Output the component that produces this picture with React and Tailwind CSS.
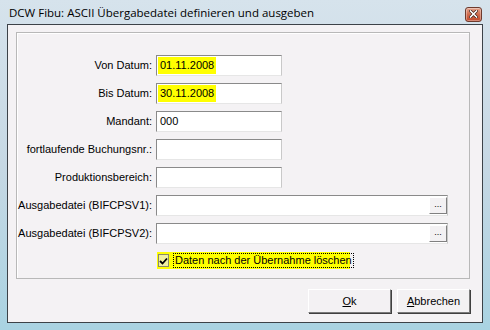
import React from "react";

function Field({ label, value, hl, wide }) {
  return (
    <div className="flex items-center">
      <div className="w-[138px] pr-[4px] text-right text-[11px] leading-none text-black whitespace-nowrap">{label}</div>
      <div
        className={`flex h-[21px] items-center border-t border-l border-t-[#8a8a8a] border-l-[#8a8a8a] border-r border-b border-r-[#c9c9c9] border-b-[#e6e6e6] bg-white ${wide ? "w-[292px]" : "w-[126px]"}`}
      >
        {value ? (
          <span className={`ml-[1px] px-[2px] h-[17px] flex items-center text-[11px] text-black ${hl ? "bg-[#ffff00]" : ""}`}>{value}</span>
        ) : null}
        {wide ? (
          <div className="ml-auto flex h-[17px] w-[18px] items-center justify-center border border-t-white border-l-white border-r-[#808080] border-b-[#808080] bg-[#f3f1f3] text-[9px] leading-none text-black">
            <span className="-mt-[3px]">...</span>
          </div>
        ) : null}
      </div>
    </div>
  );
}

function Btn({ children, w }) {
  return (
    <div className={`flex h-[24px] ${w} items-center justify-center border border-t-white border-l-white border-r-[#7a7a7a] border-b-[#7a7a7a] shadow-[1px_1px_0_#404040] bg-[#f3f1f3] text-[11px] text-black`}>
      {children}
    </div>
  );
}

export default function App() {
  return (
    <div
      className="relative flex h-[330px] w-[490px] flex-col overflow-hidden bg-gradient-to-b from-[#d6e3ec] via-[#c6d8e4] to-[#a9d3e2]"
      style={{ fontFamily: '"Liberation Sans", Arial, sans-serif' }}
    >
      {/* title bar */}
      <div className="flex h-[24px] items-center justify-between pl-[9px] pr-[8px]">
        <span className="text-[11.5px] text-black pt-[2px]" style={{ fontFamily: '"Open Sans", "Noto Sans", sans-serif' }}>
          DCW Fibu: ASCII Übergabedatei definieren und ausgeben
        </span>
        <div className="mt-[4px] flex h-[15px] w-[17px] items-center justify-center rounded-[3px] border border-[#6e3b2e] bg-gradient-to-b from-[#e3a48e] via-[#cf6a4c] to-[#c0472a] shadow-[inset_0_0_0_1px_rgba(255,255,255,0.35)]">
          <svg width="9" height="8" viewBox="0 0 9 8">
            <path d="M1.5 1 L7.5 7 M7.5 1 L1.5 7" stroke="#3a1a14" strokeWidth="3" strokeLinecap="square" />
            <path d="M1.5 1 L7.5 7 M7.5 1 L1.5 7" stroke="#ffffff" strokeWidth="1.6" strokeLinecap="square" />
          </svg>
        </div>
      </div>
      {/* client area */}
      <div className="mx-[7px] flex h-[299px] flex-col border border-[#3c4248] bg-[#f4f2f4] pl-[8px] pr-[12px] pt-[7px]">
        <div className="flex h-[247px] flex-col border border-[#b8b8b8] shadow-[inset_1px_1px_0_#ffffff] pt-[22px] pl-[1px]">
          <div className="flex flex-col gap-[7px]">
            <Field label="Von Datum:" value="01.11.2008" hl />
            <Field label="Bis Datum:" value="30.11.2008" hl />
            <Field label="Mandant:" value="000" />
            <Field label="fortlaufende Buchungsnr.:" />
            <Field label="Produktionsbereich:" />
            <Field label="Ausgabedatei (BIFCPSV1):" wide />
            <Field label="Ausgabedatei (BIFCPSV2):" wide />
          </div>
          <div className="mt-[8px] ml-[139px] flex h-[17px] w-[193px] items-center bg-[#ffff00]">
            <div className="ml-[1px] flex h-[13px] w-[13px] items-center justify-center border border-[#8a8a6a] bg-[#f0f0a0]">
              <svg width="9" height="8" viewBox="0 0 9 8">
                <path d="M1 4 L3.5 6.5 L8 1.5" stroke="#000" strokeWidth="1.8" fill="none" />
              </svg>
            </div>
            <span className="ml-[4px] h-[15px] px-[1px] flex items-center border border-dotted border-black text-[11px] text-black whitespace-nowrap">
              Daten nach der Übernahme löschen
            </span>
          </div>
        </div>
        <div className="mt-[10px] flex justify-end gap-[6px]">
          <Btn w="w-[83px]"><span><span className="underline">O</span>k</span></Btn>
          <Btn w="w-[73px]"><span><span className="underline">A</span>bbrechen</span></Btn>
        </div>
      </div>
    </div>
  );
}
